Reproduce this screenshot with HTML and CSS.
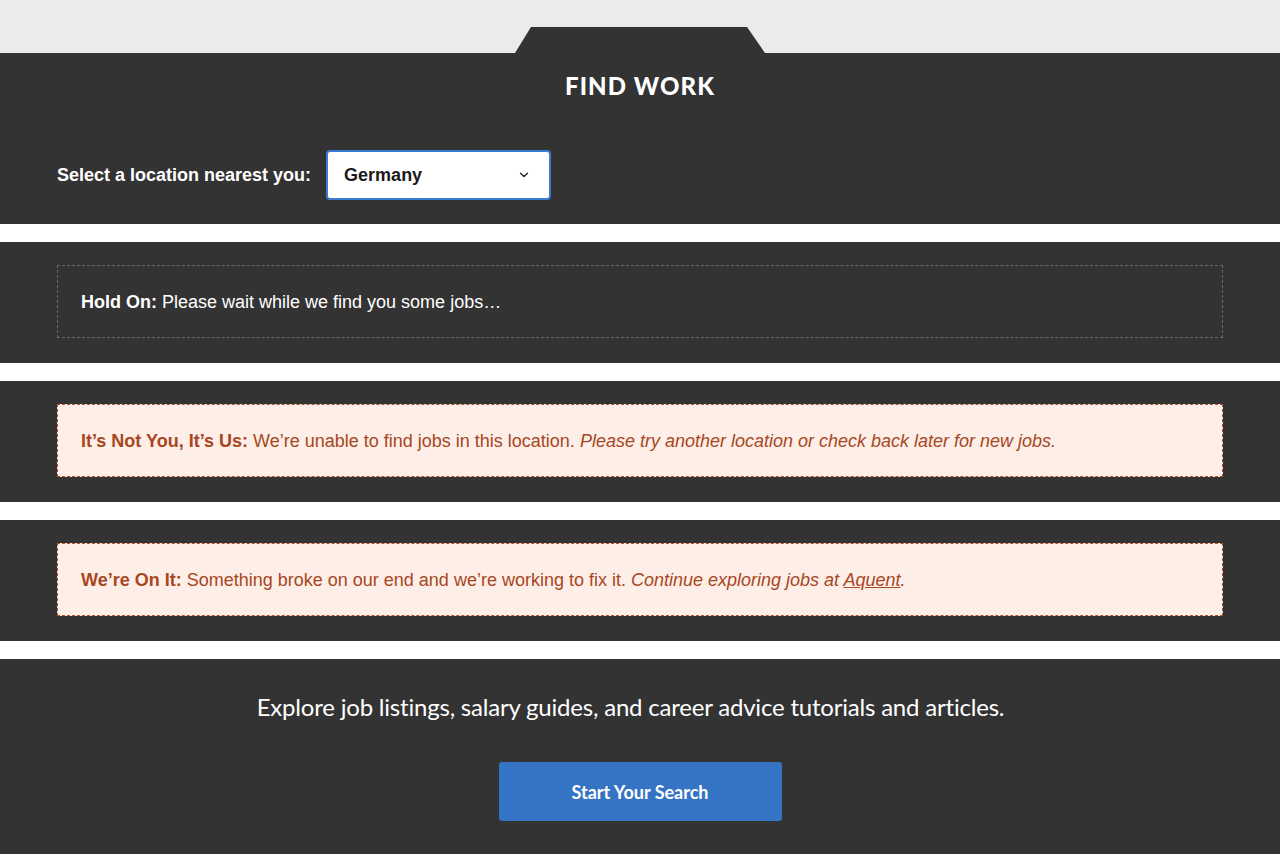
FILE: index.html
```html
<!DOCTYPE html>
<html lang="en">
<head>
<meta charset="utf-8">
<title>Find Work</title>
<link rel="stylesheet" href="styles.css">
</head>
<body>
<div class="page">
  <div class="topbar">
    <div class="tab"></div>
  </div>
  <section class="hero">
    <h1 class="title">FIND WORK</h1>
    <div class="locrow">
      <label class="loclabel" for="loc">Select a location nearest you:</label>
      <div class="select">
        <span class="select-value">Germany</span>
        <svg class="chev" width="10" height="6" viewBox="0 0 10 6"><path d="M1.5 1.2 L5 4.6 L8.5 1.2" fill="none" stroke="#222" stroke-width="1.4" stroke-linecap="round" stroke-linejoin="round"/></svg>
      </div>
    </div>
  </section>
  <section class="band">
    <div class="notice notice-info"><strong>Hold On:</strong> Please wait while we find you some jobs…</div>
  </section>
  <section class="band">
    <div class="notice notice-error"><strong>It’s Not You, It’s Us:</strong> We’re unable to find jobs in this location. <em>Please try another location or check back later for new jobs.</em></div>
  </section>
  <section class="band">
    <div class="notice notice-error"><strong>We’re On It:</strong> Something broke on our end and we’re working to fix it. <em>Continue exploring jobs at <a href="#">Aquent</a>.</em></div>
  </section>
  <section class="explore">
    <p class="explore-text">Explore job listings, salary guides, and career advice tutorials and articles.</p>
    <a class="btn" href="#">Start Your Search</a>
  </section>
</div>
</body>
</html>
```
FILE: styles.css
```css
* { box-sizing: border-box; }
html, body { margin: 0; padding: 0; }
body {
  background: #ffffff;
  font-family: "Liberation Sans", Arial, sans-serif;
  width: 1280px;
  overflow: hidden;
}
.page {
  display: flex;
  flex-direction: column;
  gap: 18px;
}
.topbar {
  height: 53px;
  background: #ebebeb;
  display: flex;
  justify-content: center;
  align-items: flex-end;
  margin-bottom: -18px;
}
.tab {
  width: 250px;
  height: 26px;
  background: #333333;
  clip-path: polygon(16px 0, calc(100% - 18px) 0, 100% 100%, 0 100%);
}
.hero {
  background: #333333;
  height: 171px;
  padding: 18px 57px 0;
}
.title {
  margin: 0;
  text-align: center;
  color: #ffffff;
  font-family: "Lato", "Open Sans", sans-serif;
  font-weight: 900;
  font-size: 24px;
  letter-spacing: 1.1px;
  line-height: 30px;
}
.locrow {
  display: flex;
  align-items: center;
  gap: 15px;
  margin-top: 49px;
}
.loclabel {
  color: #ffffff;
  font-weight: bold;
  font-size: 18px;
}
.select {
  width: 225px;
  height: 50px;
  background: #ffffff;
  border: 2px solid #3b7bd4;
  border-radius: 4px;
  display: flex;
  align-items: center;
  justify-content: space-between;
  padding: 0 20px 0 16px;
}
.select-value {
  font-weight: bold;
  font-size: 18px;
  color: #1a1a1a;
}
.band {
  background: #333333;
  height: 121px;
  padding: 23px 57px 0;
}
.notice {
  height: 73px;
  display: flex;
  align-items: center;
  padding: 2px 23px 0;
  font-size: 18px;
  white-space: pre;
}
.notice strong { font-weight: bold; }
.notice-info {
  border: 1px dashed #686868;
  color: #ffffff;
}
.notice-error {
  background: #fdefe7;
  border: 1px dashed #b0532c;
  color: #a8461f;
}
.notice-error em { font-style: italic; }
.notice-error a { color: #a8461f; text-decoration: underline; }
.explore {
  background: #333333;
  height: 200px;
  display: flex;
  flex-direction: column;
  align-items: center;
  padding-top: 30px;
}
.explore-text {
  margin: 0 19px 0 0;
  color: #ffffff;
  font-family: "Lato", sans-serif;
  font-size: 24px;
  letter-spacing: -0.2px;
  line-height: 36px;
}
.btn {
  margin-top: 37px;
  width: 283px;
  height: 59px;
  background: #3574c4;
  border-radius: 3px;
  color: #ffffff;
  text-decoration: none;
  display: flex;
  align-items: center;
  justify-content: center;
  font-family: "Lato", sans-serif;
  font-weight: bold;
  font-size: 18px;
}
```
